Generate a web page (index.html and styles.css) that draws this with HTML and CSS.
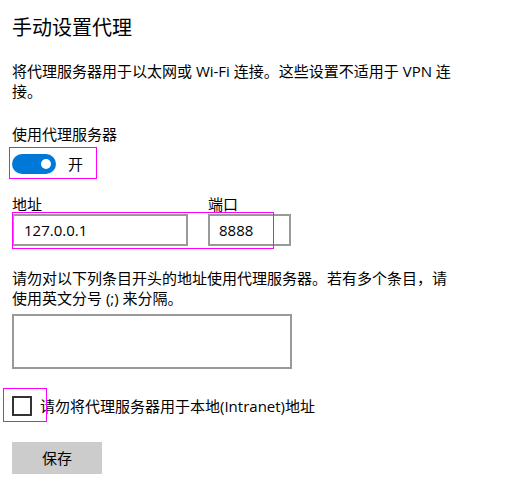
FILE: index.html
```html
<!DOCTYPE html>
<html lang="zh-CN">
<head>
<meta charset="utf-8">
<title>手动设置代理</title>
<link rel="stylesheet" href="styles.css">
</head>
<body>
<main class="page">
  <h1 class="title">手动设置代理</h1>
  <p class="desc">将代理服务器用于以太网或 Wi-Fi 连接。这些设置不适用于 VPN 连接。</p>

  <div class="label use-label">使用代理服务器</div>
  <div class="toggle-row">
    <span class="toggle"><span class="knob"></span></span>
    <span class="toggle-text">开</span>
  </div>

  <div class="fields">
    <div class="field">
      <div class="label">地址</div>
      <div class="input addr">127.0.0.1</div>
    </div>
    <div class="field">
      <div class="label">端口</div>
      <div class="input port">8888</div>
    </div>
  </div>

  <p class="desc desc2">请勿对以下列条目开头的地址使用代理服务器。若有多个条目，请使用英文分号 (;) 来分隔。</p>
  <div class="textarea"></div>

  <div class="check-row">
    <span class="checkbox"></span>
    <span class="check-text">请勿将代理服务器用于本地(Intranet)地址</span>
  </div>

  <button class="save">保存</button>

  <div class="mark mark-toggle"></div>
  <div class="mark mark-fields"></div>
  <div class="mark mark-check"></div>
</main>
</body>
</html>
```

FILE: styles.css
```css
* { box-sizing: border-box; }
html, body { margin: 0; padding: 0; background: #fff; }
body {
  font-family: "Open Sans", "Noto Sans CJK SC", sans-serif;
  font-size: 15px;
  line-height: 20px;
  color: #000;
}
.page {
  position: relative;
  width: 527px;
  height: 483px;
  padding: 14px 12px 0 12px;
  display: flex;
  flex-direction: column;
  align-items: flex-start;
}
.title {
  margin: 0;
  font-size: 20px;
  line-height: 28px;
  font-weight: 400;
}
.desc {
  margin: 19px 0 0 0;
  width: 446px;
}
.use-label { margin-top: 23px; }
.toggle-row {
  margin-top: 10px;
  display: flex;
  align-items: center;
  height: 20px;
}
.toggle {
  width: 44px;
  height: 20px;
  border-radius: 10px;
  background: #0078d7;
  display: flex;
  align-items: center;
  justify-content: flex-end;
  padding-right: 5px;
}
.knob {
  width: 10px;
  height: 10px;
  border-radius: 50%;
  background: #fff;
}
.toggle-text { margin-left: 12px; }
.fields {
  margin-top: 20px;
  display: flex;
  gap: 20px;
}
.field { display: flex; flex-direction: column; }
.input {
  height: 32px;
  border: 2px solid #999;
  padding: 4px 0 0 10px;
}
.addr { width: 176px; }
.port { width: 83px; padding-left: 9px; }
.desc2 { margin-top: 22px; }
.textarea {
  margin-top: 6px;
  width: 280px;
  height: 55px;
  border: 2px solid #999;
}
.check-row {
  margin-top: 27px;
  display: flex;
  align-items: center;
  height: 20px;
}
.checkbox {
  width: 20px;
  height: 20px;
  border: 2px solid #333;
}
.check-text { margin-left: 8px; }
.save {
  margin-top: 26px;
  width: 90px;
  height: 32px;
  border: none;
  background: #ccc;
  font: inherit;
  color: #000;
  padding: 0;
}
.mark {
  position: absolute;
  border: 1px solid #ff00ff;
}
.mark-toggle { left: 9px; top: 147px; width: 88px; height: 32px; }
.mark-fields { left: 12px; top: 212px; width: 262px; height: 37px; }
.mark-check { left: 3px; top: 388px; width: 44px; height: 34px; }
```
